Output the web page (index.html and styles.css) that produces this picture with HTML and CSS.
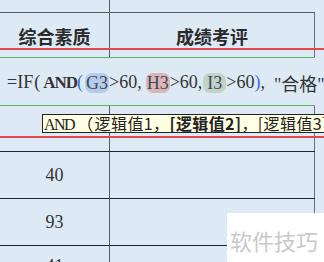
FILE: index.html
```html
<!DOCTYPE html>
<html lang="en">
<head>
    <meta charset="UTF-8">
    <meta name="viewport" content="width=device-width, initial-scale=1.0">
    <title>成绩考评</title>
    <link rel="stylesheet" href="styles.css">
</head>
<body>
    <div class="row top"><div class="c1"></div><div class="c2"></div></div>
    <div class="row head">
        <div class="c1">综合素质</div>
        <div class="c2">成绩考评</div>
    </div>
    <div class="red"></div>
    <div class="row gap"><div class="c1"></div><div class="c2"></div></div>
    <div class="green"></div>
    <div class="formula">=IF<span class="p">(</span><b>AND</b><span class="blue">(</span><span class="ref g">G3</span>&gt;60,<span class="ref h">H3</span>&gt;60,<span class="ref i">I3</span>&gt;60<span class="blue">)</span>,<span class="txt">"合格"</span></div>
    <div class="green"></div>
    <div class="row part"><div class="c1 num">91</div><div class="c2"></div></div>
    <div class="red"></div>
    <div class="row thin line"><div class="c1"></div><div class="c2"></div></div>
    <div class="row data line"><div class="c1 num">40</div><div class="c2"></div></div>
    <div class="row data line"><div class="c1 num">93</div><div class="c2"></div></div>
    <div class="row tail"><div class="c1 num">41</div><div class="c2"></div></div>

    <div class="tip"><span class="fn">AND</span><span class="open">（</span>逻辑值1，<b>[逻辑值2]</b>，[逻辑值3]...</div>
    <div class="mark">软件技巧</div>
</body>
</html>
```

FILE: styles.css
```css
body { margin: 0; width: 324px; height: 262px; overflow: hidden; position: relative; background: #dde9f5; font-family: "Liberation Serif", "Noto Sans CJK SC", serif; color: #2a2a2a; }
.row { display: grid; grid-template-columns: 110px 205px; width: 315px; }
.c1 { border-right: 1px solid #555a66; }
.c2 { border-right: 1px solid #6a707c; }
.top { height: 12px; }
.top .c2 { border-right: none; }
.head { height: 35px; border-top: 1px solid #555a66; font-family: "Noto Sans CJK SC", sans-serif; font-weight: bold; font-size: 18px; }
.head > div { display: flex; align-items: flex-end; justify-content: center; line-height: 24px; }
.red { height: 2px; background: #df4a4d; }
.gap { height: 7px; }
.green { height: 1px; width: 315px; background: #5db35d; }
.formula { height: 45px; display: flex; align-items: center; padding: 2px 0 0 7px; font-size: 18px; white-space: nowrap; color: #333; }
.formula b { font-size: 17px; letter-spacing: -1px; }
.p { margin: 0 3px 0 1px; }
.blue { color: #3b6fd4; }
.ref { border-radius: 7px; padding: 0 1px; margin-left: 2px; line-height: 20px; color: #3d4a5c; }
.g { background: #b6cbe9; }
.h { background: #dcb5b7; margin-left: 4px; }
.i { background: #c2d3c6; margin-left: 1px; padding: 0 4px; }
.txt { margin-left: 9px; }
.part { height: 30px; }
.thin { height: 13px; }
.line { border-bottom: 1px solid #1f2430; }
.data { height: 46px; }
.tail { height: 18px; overflow: hidden; }
.num { display: flex; align-items: center; justify-content: center; font-size: 18px; color: #333; }
.part .num { align-items: flex-end; line-height: 18px; }
.tail .num { align-items: flex-start; padding-top: 10px; }
.tip { position: absolute; left: 42px; right: 0; top: 114px; height: 17px; border: 1px solid #222; border-right: none; background: #ffffe3; font-family: "Noto Sans CJK SC", sans-serif; font-size: 16px; letter-spacing: 0.4px; line-height: 17px; padding-left: 1px; white-space: nowrap; color: #222; }
.fn { font-family: "Liberation Serif", serif; font-size: 16px; letter-spacing: -1.5px; margin-right: 3px; }
.open { margin-right: 1px; }
.mark { position: absolute; left: 227px; top: 213px; right: 0; bottom: 0; background: #fff; font-family: "Noto Sans CJK SC", sans-serif; font-size: 22px; color: #c9c9c9; padding: 11px 0 0 3px; white-space: nowrap; }
```
